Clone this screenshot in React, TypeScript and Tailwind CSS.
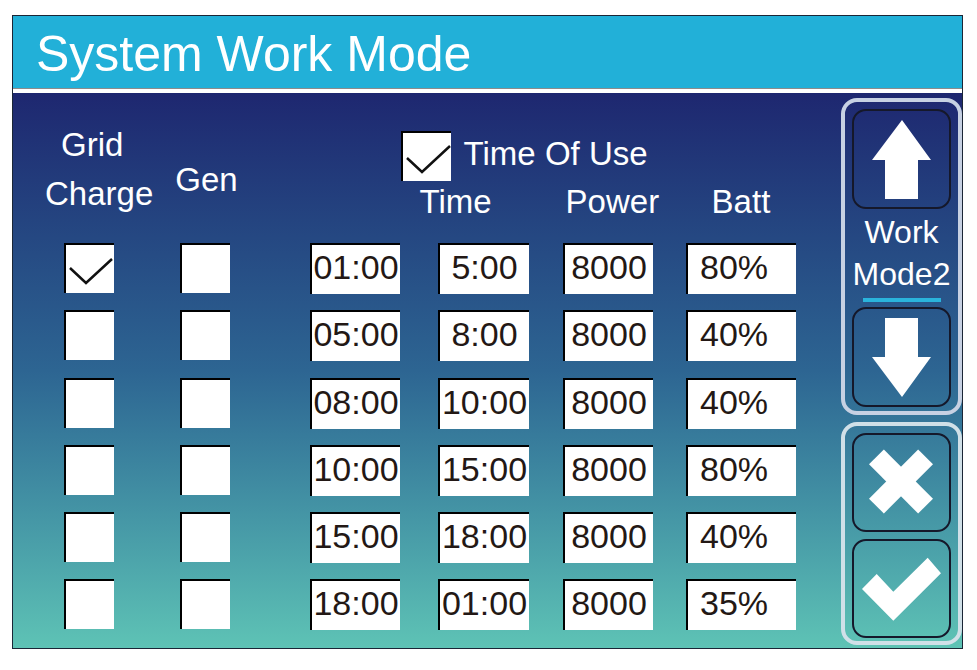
import React from "react";

const rows = [
  { grid: true, gen: false, a: "01:00", b: "5:00", p: "8000", batt: "80%" },
  { grid: false, gen: false, a: "05:00", b: "8:00", p: "8000", batt: "40%" },
  { grid: false, gen: false, a: "08:00", b: "10:00", p: "8000", batt: "40%" },
  { grid: false, gen: false, a: "10:00", b: "15:00", p: "8000", batt: "80%" },
  { grid: false, gen: false, a: "15:00", b: "18:00", p: "8000", batt: "40%" },
  { grid: false, gen: false, a: "18:00", b: "01:00", p: "8000", batt: "35%" },
];

function Check({ checked, path }: { checked: boolean; path: string }) {
  return (
    <div className="w-[50px] h-[50px] bg-white border-l-2 border-t-2 border-black shrink-0 relative">
      {checked && (
        <svg className="absolute -left-[2px] -top-[2px]" width="50" height="50" viewBox="0 0 50 50">
          <polyline points={path} fill="none" stroke="#111" strokeWidth="2.5" />
        </svg>
      )}
    </div>
  );
}

function Box({ text, w, left }: { text: string; w: string; left?: boolean }) {
  return (
    <div
      className={`${w} h-[51px] bg-white border-l-2 border-t-2 border-black shrink-0 flex items-center ${
        left ? "justify-start pl-[12px]" : "justify-center"
      } pb-[5px] text-[34px] leading-none text-[#231815]`}
    >
      {text}
    </div>
  );
}

function PanelButton({ children, h }: { children: React.ReactNode; h: string }) {
  return (
    <div className={`w-[99px] ${h} mx-auto rounded-[14px] border-2 border-[#15182a] relative`}>
      {children}
    </div>
  );
}

export default function App() {
  return (
    <div
      className="w-[977px] h-[670px] bg-white pt-[15px] pl-[12px]"
      style={{ fontFamily: '"Liberation Sans", Arial, sans-serif' }}
    >
      <div className="w-[951px] h-[634px] border border-[#1b2636] flex flex-col">
        {/* Header */}
        <div className="h-[72px] bg-[#22b0d8] pt-[13px] pl-[23px] text-white text-[50px] leading-none">
          System Work Mode
        </div>
        <div className="h-[5px] bg-white border-t border-[#8c8c8c]" />
        {/* Body */}
        <div className="flex-1 flex bg-gradient-to-b from-[#1e2770] via-[#2d6592] to-[#5ec3b5] text-white">
          {/* Left content */}
          <div className="flex-1 flex flex-col">
            <div className="h-[150px] flex items-start text-[33px] leading-none">
              <div className="ml-[32px] flex flex-col">
                <span className="mt-[35px] ml-[16px]">Grid</span>
                <span className="mt-[16px]">Charge</span>
              </div>
              <div className="ml-[22px] mt-[70px]">Gen</div>
              <div className="ml-[163px] mt-[38px] flex flex-col">
                <div className="flex items-start">
                  <Check checked path="6,27 21,41 49,15" />
                  <span className="ml-[13px] mt-[6px]">Time Of Use</span>
                </div>
                <div className="flex mt-[4px] ml-[19px]">
                  <span className="w-[146px]">Time</span>
                  <span className="w-[146px]">Power</span>
                  <span>Batt</span>
                </div>
              </div>
            </div>
            <div className="flex flex-col gap-[16.3px] pl-[51px]">
              {rows.map((r, i) => (
                <div key={i} className="flex items-start">
                  <Check checked={r.grid} path="6,25 22,40 48,16" />
                  <div className="ml-[66px]">
                    <Check checked={r.gen} path="6,25 22,40 48,16" />
                  </div>
                  <div className="ml-[80px]">
                    <Box text={r.a} w="w-[90px]" />
                  </div>
                  <div className="ml-[38px]">
                    <Box text={r.b} w="w-[91px]" />
                  </div>
                  <div className="ml-[34px]">
                    <Box text={r.p} w="w-[90px]" />
                  </div>
                  <div className="ml-[33px]">
                    <Box text={r.batt} w="w-[110px]" left />
                  </div>
                </div>
              ))}
            </div>
          </div>
          {/* Right panel */}
          <div className="w-[121px] flex flex-col">
            <div className="mt-[5px] h-[317px] rounded-[16px] border-4 border-[#c7d1e3] pt-[7px] flex flex-col">
              <PanelButton h="h-[100px]">
                <svg className="absolute -left-[2px] -top-[2px]" width="99" height="100" viewBox="0 0 99 100">
                  <polygon points="50,11 79,51 66,51 66,90 33,90 33,51 20,51" fill="white" />
                </svg>
              </PanelButton>
              <div className="mt-[7px] text-center text-[32px] leading-none">Work</div>
              <div className="mt-[10px] text-center text-[32px] leading-none">Mode2</div>
              <div className="mt-[8px] mx-auto w-[78px] h-[4px] bg-[#2ab4dc]" />
              <div className="mt-[5px]">
                <PanelButton h="h-[100px]">
                  <svg className="absolute -left-[2px] -top-[2px]" width="99" height="100" viewBox="0 0 99 100">
                    <polygon points="33,11 66,11 66,50 79,50 50,90 20,50 33,50" fill="white" />
                  </svg>
                </PanelButton>
              </div>
            </div>
            <div className="mt-[7px] h-[223px] rounded-[16px] border-4 border-[#d0e0e8] pt-[7px] flex flex-col gap-[7px]">
              <PanelButton h="h-[99px]">
                <svg className="absolute -left-[2px] -top-[2px]" width="99" height="99" viewBox="0 0 99 99">
                  <g transform="translate(49 48.5) rotate(45)">
                    <rect x="-34.75" y="-10.5" width="69.5" height="21" fill="white" />
                    <rect x="-10.5" y="-34.75" width="21" height="69.5" fill="white" />
                  </g>
                </svg>
              </PanelButton>
              <PanelButton h="h-[99px]">
                <svg className="absolute -left-[2px] -top-[2px]" width="99" height="99" viewBox="0 0 99 99">
                  <polygon points="10,50 24.7,35 41.3,52.7 75.7,18.7 89,34.3 41.3,81.7" fill="white" />
                </svg>
              </PanelButton>
            </div>
          </div>
        </div>
      </div>
    </div>
  );
}
